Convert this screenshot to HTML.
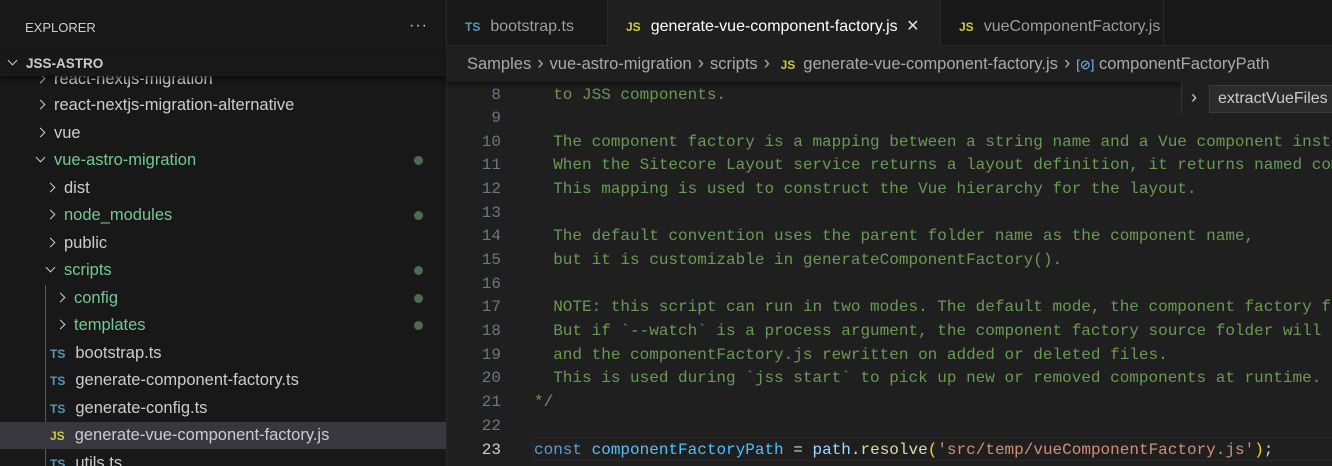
<!DOCTYPE html>
<html><head><style>
*{margin:0;padding:0;box-sizing:border-box}
body{width:1332px;height:466px;overflow:hidden;background:#1f1f1f;font-family:"Liberation Sans",sans-serif;position:relative}
.side{position:absolute;left:0;top:0;width:447px;height:466px;background:#181818;border-right:1px solid #2b2b2b;overflow:hidden}
.hdr{position:absolute;left:25px;top:20px;font-size:13px;color:#cccccc}
.dots{position:absolute;left:409px;top:17px;color:#ccc;font-size:16px;letter-spacing:1px}
.root{position:absolute;left:0;top:52px;width:446px;height:24px;background:#181818;box-shadow:0 3px 5px rgba(0,0,0,.6);z-index:2;color:#ccc;font-weight:bold;font-size:13.5px;line-height:24px}
.row{position:absolute;height:27px;line-height:27px;font-size:16.5px;color:#cccccc;white-space:nowrap;width:446px}
.g{color:#73c991}
.chev{display:inline-block;width:7px;height:7px;border-right:1.5px solid #ccc;border-bottom:1.5px solid #ccc;transform:rotate(-45deg);margin-right:10px;position:relative;top:-2px}
.down{transform:rotate(45deg);top:-4px}
.dot{position:absolute;right:23px;top:9px;width:9px;height:9px;border-radius:50%;background:#4e6b52}
.ts{color:#519aba;font-weight:bold;font-size:12px;margin-right:10px}
.js{color:#cbcb41;font-weight:bold;font-size:12px;margin-right:10px}
.tabs{position:absolute;left:447px;top:0;width:885px;height:46px;background:#181818;border-bottom:1px solid #2b2b2b}
.tab{position:absolute;top:0;height:46px;line-height:54px;font-size:16px;color:#9d9d9d;border-right:1px solid #2b2b2b;padding-left:18px;white-space:nowrap;overflow:hidden}
.tab.act{background:#1f1f1f;color:#fff;height:47px}
.bc{position:absolute;left:447px;top:46px;width:885px;height:36px;line-height:36px;background:#1f1f1f;font-size:16.5px;color:#a9a9a9;padding-left:20px;white-space:nowrap;box-shadow:0 3px 5px rgba(0,0,0,.5);z-index:2}
.bc .s{font-size:19px;margin:0 6px}
.code{position:absolute;left:447px;top:82px;width:885px;height:384px;font-family:"Liberation Mono",monospace;font-size:16px;overflow:hidden}
.ln{position:absolute;left:0;width:54px;text-align:right;color:#6e7681;height:24px;line-height:24px}
.tx{position:absolute;left:87px;white-space:pre;height:24px;line-height:24px;color:#6a9955}
.sticky{position:absolute;left:1181px;top:82px;width:151px;height:33px;background:#1f1f1f;border-left:1px solid #333;z-index:3}
.sticky .b{position:absolute;left:27px;top:3px;width:124px;height:28px;background:#2b2b2b;border:1px solid #3c3c3c;color:#ccc;font-size:16px;line-height:26px;padding-left:8px}
</style></head><body>
<div class="side">
<div class="hdr">EXPLORER</div><div class="dots">···</div>
<div class="root"><span class="chev down" style="margin-left:9px;margin-right:10px"></span>JSS-ASTRO</div>
<div class="row" style="top:66px;padding-left:37px"><span class="chev"></span>react-nextjs-migration</div>
<div class="row" style="top:92px;padding-left:37px"><span class="chev"></span>react-nextjs-migration-alternative</div>
<div class="row" style="top:120px;padding-left:37px"><span class="chev"></span>vue</div>
<div class="row g" style="top:147px;padding-left:37px"><span class="chev down"></span>vue-astro-migration<span class="dot"></span></div>
<div class="row" style="top:175px;padding-left:47px"><span class="chev"></span>dist</div>
<div class="row g" style="top:202px;padding-left:47px"><span class="chev"></span>node_modules<span class="dot"></span></div>
<div class="row" style="top:230px;padding-left:47px"><span class="chev"></span>public</div>
<div class="row g" style="top:257px;padding-left:47px"><span class="chev down"></span>scripts<span class="dot"></span></div>
<div style="position:absolute;left:45px;top:285px;width:1px;height:181px;background:#585858"></div>
<div class="row g" style="top:285px;padding-left:57px"><span class="chev"></span>config<span class="dot"></span></div>
<div class="row g" style="top:312px;padding-left:57px"><span class="chev"></span>templates<span class="dot"></span></div>
<div class="row" style="top:340px;padding-left:50px"><span class="ts">TS</span>bootstrap.ts</div>
<div class="row" style="top:367px;padding-left:50px"><span class="ts">TS</span>generate-component-factory.ts</div>
<div class="row" style="top:395px;padding-left:50px"><span class="ts">TS</span>generate-config.ts</div>
<div class="row" style="top:422px;padding-left:50px;background:#37373d"><span class="js">JS</span>generate-vue-component-factory.js</div>
<div class="row" style="top:450px;padding-left:50px"><span class="ts">TS</span>utils.ts</div>
</div>
<div class="tabs">
<div class="tab" style="left:0;width:161px"><span class="ts">TS</span>bootstrap.ts</div>
<div class="tab act" style="left:161px;width:333px"><span class="js">JS</span>generate-vue-component-factory.js <span style="margin-left:4px;color:#ddd">✕</span></div>
<div class="tab" style="left:494px;width:223px"><span class="js">JS</span>vueComponentFactory.js</div>
</div>
<div class="bc">Samples<span class="s">›</span>vue-astro-migration<span class="s">›</span>scripts<span class="s">›</span> <span class="js" style="margin-right:8px">JS</span>generate-vue-component-factory.js<span class="s">›</span><span style="color:#75beff;font-size:13px">[⊘]</span> componentFactoryPath</div>
<div class="sticky"><span style="position:absolute;left:9px;top:5px;color:#ccc;font-size:18px">›</span><div class="b">extractVueFiles</div></div>
<div class="code">
<div class="ln" style="top:1px">8</div><div class="tx" style="top:1px">  to JSS components.</div>
<div class="ln" style="top:24px">9</div>
<div class="ln" style="top:48px">10</div><div class="tx" style="top:48px">  The component factory is a mapping between a string name and a Vue component instance.</div>
<div class="ln" style="top:71px">11</div><div class="tx" style="top:71px">  When the Sitecore Layout service returns a layout definition, it returns named components.</div>
<div class="ln" style="top:95px">12</div><div class="tx" style="top:95px">  This mapping is used to construct the Vue hierarchy for the layout.</div>
<div class="ln" style="top:119px">13</div>
<div class="ln" style="top:142px">14</div><div class="tx" style="top:142px">  The default convention uses the parent folder name as the component name,</div>
<div class="ln" style="top:166px">15</div><div class="tx" style="top:166px">  but it is customizable in generateComponentFactory().</div>
<div class="ln" style="top:190px">16</div>
<div class="ln" style="top:213px">17</div><div class="tx" style="top:213px">  NOTE: this script can run in two modes. The default mode, the component factory file</div>
<div class="ln" style="top:237px">18</div><div class="tx" style="top:237px">  But if `--watch` is a process argument, the component factory source folder will be</div>
<div class="ln" style="top:261px">19</div><div class="tx" style="top:261px">  and the componentFactory.js rewritten on added or deleted files.</div>
<div class="ln" style="top:284px">20</div><div class="tx" style="top:284px">  This is used during `jss start` to pick up new or removed components at runtime.</div>
<div class="ln" style="top:308px">21</div><div class="tx" style="top:308px">*/</div>
<div class="ln" style="top:332px">22</div>
<div style="position:absolute;left:86px;top:355px;width:800px;height:24px;border:1px solid #282828"></div>
<div class="ln" style="top:356px;color:#ccc">23</div><div class="tx" style="top:356px"><span style="color:#569cd6">const</span> <span style="color:#4fc1ff">componentFactoryPath</span> <span style="color:#d4d4d4">=</span> <span style="color:#9cdcfe">path</span><span style="color:#d4d4d4">.</span><span style="color:#dcdcaa">resolve</span><span style="color:#ffd700">(</span><span style="color:#ce9178">'src/temp/vueComponentFactory.js'</span><span style="color:#ffd700">)</span><span style="color:#d4d4d4">;</span></div>
</div>
</body></html>
